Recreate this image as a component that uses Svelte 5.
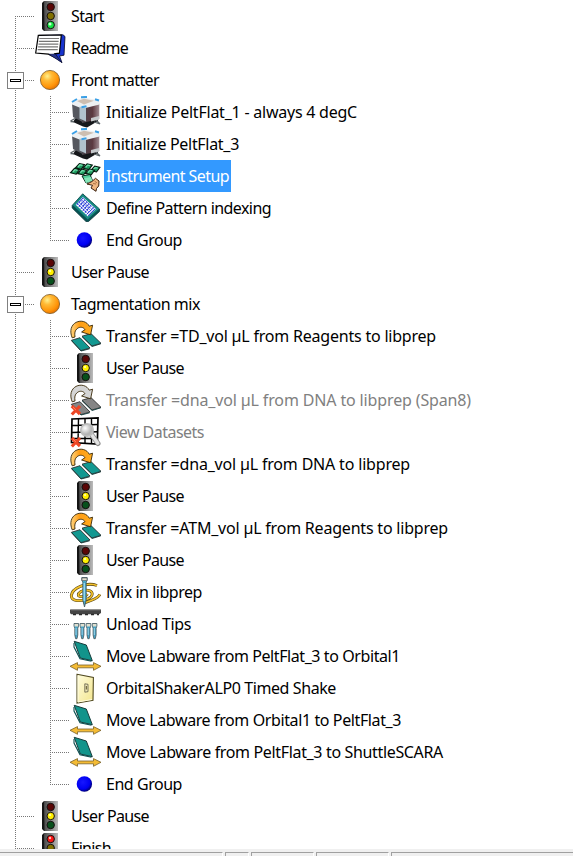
<script>
  const rows = [
    { d: 0, icon: 'green', text: 'Start', w: 33, first: true },
    { d: 0, icon: 'note', text: 'Readme', w: 57 },
    { d: 0, icon: 'orange', text: 'Front matter', w: 88, box: true },
    { d: 1, icon: 'pelt', text: 'Initialize PeltFlat_1 - always 4 degC', w: 251 },
    { d: 1, icon: 'pelt', text: 'Initialize PeltFlat_3', w: 133 },
    { d: 1, icon: 'setup', text: 'Instrument Setup', w: 123, selected: true },
    { d: 1, icon: 'pattern', text: 'Define Pattern indexing', w: 165 },
    { d: 1, icon: 'blue', text: 'End Group', w: 76, end: true },
    { d: 0, icon: 'yellow', text: 'User Pause', w: 78 },
    { d: 0, icon: 'orange', text: 'Tagmentation mix', w: 129, box: true },
    { d: 1, icon: 'transfer', text: 'Transfer =TD_vol µL from Reagents to libprep', w: 330 },
    { d: 1, icon: 'yellow', text: 'User Pause', w: 78 },
    { d: 1, icon: 'transferOff', text: 'Transfer =dna_vol µL from DNA to libprep (Span8)', w: 365, off: true },
    { d: 1, icon: 'datasets', text: 'View Datasets', w: 98, off: true },
    { d: 1, icon: 'transfer', text: 'Transfer =dna_vol µL from DNA to libprep', w: 304 },
    { d: 1, icon: 'yellow', text: 'User Pause', w: 78 },
    { d: 1, icon: 'transfer', text: 'Transfer =ATM_vol µL from Reagents to libprep', w: 342 },
    { d: 1, icon: 'yellow', text: 'User Pause', w: 78 },
    { d: 1, icon: 'mix', text: 'Mix in libprep', w: 96 },
    { d: 1, icon: 'tips', text: 'Unload Tips', w: 85 },
    { d: 1, icon: 'move', text: 'Move Labware from PeltFlat_3 to Orbital1', w: 294 },
    { d: 1, icon: 'panel', text: 'OrbitalShakerALP0 Timed Shake', w: 230 },
    { d: 1, icon: 'move', text: 'Move Labware from Orbital1 to PeltFlat_3', w: 295 },
    { d: 1, icon: 'move', text: 'Move Labware from PeltFlat_3 to ShuttleSCARA', w: 337 },
    { d: 1, icon: 'blue', text: 'End Group', w: 76, end: true },
    { d: 0, icon: 'yellow', text: 'User Pause', w: 78 },
    { d: 0, icon: 'red', text: 'Finish', w: 40, end: true }
  ];
  const tiles = [[11, 6.3], [18.7, 6.6], [26.3, 9], [6, 11.2], [13.3, 12], [21, 11.8]];
  const checks = [0, 1, 2, 3, 4];

  function fit(node, width) {
    const natural = node.getBoundingClientRect().width;
    node.style.letterSpacing = (width - natural) / node.textContent.length + 'px';
  }
</script>

<svg class="defs" aria-hidden="true">
  <defs>
    <linearGradient id="housing"><stop offset="0" stop-color="#484848" /><stop offset="1" stop-color="#bcbcbc" /></linearGradient>
    <radialGradient id="gOrange" cx=".36" cy=".3" r=".8"><stop offset="0" stop-color="#fff08e" /><stop offset=".3" stop-color="#ffba36" /><stop offset=".7" stop-color="#ff9408" /><stop offset="1" stop-color="#d86400" /></radialGradient>
    <radialGradient id="gBlue" cx=".4" cy=".38" r=".68"><stop offset="0" stop-color="#1616ff" /><stop offset=".65" stop-color="#0000f2" /><stop offset="1" stop-color="#000058" /></radialGradient>
    <linearGradient id="gArrow"><stop offset="0" stop-color="#ffd684" /><stop offset=".4" stop-color="#ff9d14" /><stop offset="1" stop-color="#ffad20" /></linearGradient>
    <linearGradient id="gPelt"><stop offset="0" stop-color="#4a474e" /><stop offset=".6" stop-color="#5b383f" /><stop offset="1" stop-color="#a08c93" /></linearGradient>
    <linearGradient id="gPanel" x2="1" y2="1"><stop offset="0" stop-color="#fffde0" /><stop offset="1" stop-color="#f3e58c" /></linearGradient>
    <radialGradient id="gLens" cx=".35" cy=".35"><stop offset="0" stop-color="#fff" /><stop offset="1" stop-color="#b4b4b4" /></radialGradient>
  </defs>
</svg>

{#snippet lights(on)}
  <path d="M8 3 10 1H24V31H10L8 29Z" fill="#151515" />
  <path d="M10 1H24V31H10.5Z" fill="url(#housing)" />
  <circle cx="16.7" cy="7" r="3.7" fill={on === 'red' ? '#fa1414' : '#5a0606'} stroke="#161010" stroke-width="1" />
  <circle cx="16.7" cy="16" r="3.7" fill={on === 'yellow' ? '#fff000' : '#817000'} stroke="#161010" stroke-width="1" />
  <circle cx="16.7" cy="25" r="3.7" fill={on === 'green' ? '#12e742' : '#07501c'} stroke="#161010" stroke-width="1" />
  {#if on === 'red'}<circle cx="16" cy="6" r="1.2" fill="#ffc0b8" />{/if}
  {#if on === 'yellow'}<circle cx="16" cy="15" r="1.1" fill="#ffffb8" />{/if}
  {#if on === 'green'}<circle cx="16" cy="24" r="1.5" fill="#c9ffd2" />{/if}
{/snippet}

{#snippet cross()}
  <path d="M2.8 22 11 30M11 22 2.8 30.5" stroke="#ed4625" stroke-width="3.2" fill="none" />
  <path d="M4 23.2 6.9 26" stroke="#ff8b68" />
{/snippet}

{#snippet transfer(arrow, plate)}
  <path d="M2.4 20.3 11 17.7 21 28 12 30.6Z" fill={plate} stroke="#222" stroke-width=".8" />
  <path d="M13 16.2 22 13.6 32 23.3 23 26Z" fill={plate} stroke="#222" stroke-width=".8" />
  <path d="M2.6 20.8 12 31 20.6 28.8M13 16.7 23 26.5 31.8 23.8" fill="none" stroke="#123c3c" stroke-width=".9" />
  <path d="M3.2 17.8C.3 11 2.2 5 7 2.4 12 -.2 18.1 1.6 20.2 6.2L23.6 5.2 21.6 14.8 12.6 12 16 9.6C14.3 6.9 10.8 6.5 8.2 8.6 5.8 10.6 5.4 13 6 17Z" fill={arrow} stroke="#392807" stroke-width=".9" />
{/snippet}

{#snippet icon(name)}
  <svg class="icon" viewBox="0 0 32 32" aria-hidden="true">
    {#if name === 'green' || name === 'yellow' || name === 'red'}
      {@render lights(name)}
    {:else if name === 'note'}
      <path d="M5 3.3 29 2.8 31 4.5 30 23.2 25.5 24 28 30.7 17 22.5Z" fill="#1834cf" stroke="#050520" stroke-width=".8" />
      <path d="M4.3 3.4 27.3 3 25.4 21.2 20.8 21.8 24.5 27.5 14.5 22.2 1.7 21Z" fill="#fff" stroke="#000" stroke-width="1.2" />
      <path d="M15 22.3 27.5 30.2 21.3 22Z" fill="#26338a" stroke="#0a1040" stroke-width=".6" />
      <path d="M5.3 6.5H25M4.8 9.3H24.6M4.5 12.1H24.3M4.1 14.9H24M3.7 17.7H23.7" stroke="#777" stroke-width="1.2" />
    {:else if name === 'orange'}
      <circle cx="16" cy="16" r="9.6" fill="url(#gOrange)" stroke="#7c5a26" stroke-width=".8" />
    {:else if name === 'blue'}
      <circle cx="15.4" cy="16" r="7.7" fill="url(#gBlue)" />
    {:else if name === 'pelt'}
      <path d="M4 26 8 20 28 21 29 25 18 31.5 14 30.5Z" fill="#15171a" />
      <path d="M1.5 25 6 22.5M1.5 25.5 5 25.8M27 24 31 28M25 26 31 28" fill="none" stroke="#5a6266" stroke-width="1.3" />
      <path d="M3 7 13.5 11.5V26L4 21Z" fill="#56585f" />
      <path d="M13 11.5 30.3 7.5V23L13 27Z" fill="url(#gPelt)" />
      <path d="M22 22 30 20V23.5L22 25.5Z" fill="#c3c7ca" />
      <path d="M3 5.5 15 1.5 30.5 4.5V8.5L13.5 12.8 3 8.5Z" fill="#edf0f2" />
      <path d="M8 5 15 2.8 25 4.8 15 8.5Z" fill="#cdbeb1" />
      <path d="M10.5 10.5 17 12V25.5L10.5 22.5Z" fill="#b1c3cd" />
      <path d="M3 6 8 3M12 1.2 18 .9M12.5 11.3 17.5 10.2M26 3.2 30 4.5" stroke="#3ba0e6" stroke-width="2" />
    {:else if name === 'setup'}
      {#each tiles as [x, y]}
        <path d="M{x - 4.6} {y + 1.6} {x - .6} {y - 2.8} {x + 4.6} {y - 1.6} {x + 1.2} {y + 3}Z" fill="#1e9a5e" stroke="#06180f" stroke-width="1.1" />
        <path d="M{x - 2} {y + .7} {x} {y - 1.5} {x + 2.4} {y - .9}" fill="none" stroke="#6fdcaa" stroke-width="1.3" />
      {/each}
      <path d="M13 16 21 14.5 23.5 20.5 17 23Z" fill="#54d29c" stroke="#08291b" />
      <path d="M15 18.3 22 17 23.5 21 17 23Z" fill="#83e5b8" />
      <path d="M18 24 23 21.5 26.5 18.3 30 21 29.7 26 27.5 28.5 27 31.3 22 28 23.5 25.3Z" fill="#efb681" stroke="#3c210d" />
      <path d="M24 23.5 27 24M25.5 21 28 23" fill="none" stroke="#8e572b" stroke-width=".7" />
    {:else if name === 'pattern'}
      <path d="M3.2 13.5 13.7 1.8 30.5 17V19.5L19.5 29.5H17L3.2 16Z" fill="#075353" stroke="#07383c" stroke-width=".8" />
      <path d="M3.7 13 13.7 2.2 30.2 16.7 18.7 27.5Z" fill="#178a83" />
      <path d="M6.7 12.8 13.8 5 27 16.9 18.9 24.6Z" fill="#fff" />
      {#each checks as n}
        <path d="M{7.8 + n * 2} {12.7 + n * 1.95} {14 + n * 2} {6 + n * 1.85}" stroke="#1a2fd5" stroke-width="1.2" stroke-dasharray="1.9 .8" />
        <path d="M{8.2 + n * 1.5} {11.3 - n * 1.25} {18.5 + n * 1.5} {21.2 - n * 1.25}" stroke="#1a2fd5" stroke-width=".6" />
      {/each}
      <path d="M17.5 22.5 25 15.3M19 23.8 26.3 16.6" stroke="#1a2fd5" stroke-width="1" />
    {:else if name === 'transfer'}
      {@render transfer('url(#gArrow)', '#129891')}
    {:else if name === 'transferOff'}
      {@render transfer('#d5d5d5', '#858585')}
      {@render cross()}
    {:else if name === 'datasets'}
      <path d="M3 3 29 1.8 28.3 28 2.5 26.5Z" fill="#fff" stroke="#000" stroke-width="1.7" />
      <path d="M3 9.5 28.5 8.5M3 16.5 28.5 15.8M3 22.5H28.5M9.5 2.5 9 27M16 2.5V27.5M22.5 3V28" stroke="#000" stroke-width="1.4" />
      <path d="M22.5 18.5 29 27.5" stroke="#8a8a8a" stroke-width="5" stroke-linecap="round" />
      <path d="M22.5 18.5 28.8 27.2" stroke="#e2e2e2" stroke-width="3.4" stroke-linecap="round" />
      <circle cx="18" cy="14" r="6.2" fill="url(#gLens)" stroke="#bdbdbd" stroke-width="1.7" />
      {@render cross()}
    {:else if name === 'mix'}
      <path d="M28 9.5C17 5.5 3 12.5 2.3 19.5 2 25.5 12 26 19.5 22.5 25 19.5 24 15 19 14.3 13 13.5 8.5 17 9.5 19.8 11.5 21.5 17 20.5 18.5 18M31 18.5C28 23.5 21 25 14.5 27" fill="none" stroke="#544314" stroke-width="2.8" />
      <path d="M28 9.5C17 5.5 3 12.5 2.3 19.5 2 25.5 12 26 19.5 22.5 25 19.5 24 15 19 14.3 13 13.5 8.5 17 9.5 19.8 11.5 21.5 17 20.5 18.5 18M31 18.5C28 23.5 21 25 14.5 27" fill="none" stroke="#f2c02c" stroke-width="1.7" />
      <path d="M12.8 1.5H18.2V4.5L17.2 6V24L15.5 31 13.8 24V6L12.8 4.5Z" fill="#48a9ca" stroke="#42545b" stroke-width=".8" />
      <path d="M13 2H18V4.5H13Z" fill="#e2e1d0" stroke="#555" stroke-width=".6" />
      <path d="M15.2 7V25" stroke="#b9eaff" stroke-width="1" />
    {:else if name === 'tips'}
      <path d="M1 1.5H32V5L30 6.2H2L1 5Z" fill="#444" />
      <path d="M2 2H31.5" stroke="#777" stroke-width=".8" />
      <path d="M4 6.5H7M10 6.5H13M16 6.5H19M22 6.5H25M28 6.5H30" stroke="#292929" stroke-width="1.6" />
      {#each [7.3, 13.4, 19.5, 25.6] as x}
        <path d="M{x - 2.3} 15.5H{x + 2.3}V18L{x + 1.5} 20.3V27L{x + .7} 30.7H{x - .7}L{x - 1.5} 27V20.3L{x - 2.3} 18Z" fill="#45a4c8" stroke="#4a5559" stroke-width=".8" />
        <path d="M{x - 1.8} 16H{x + 1.8}V18.5H{x - 1.8}Z" fill="#e0dfcf" />
        <path d="M{x - .3} 20V27" stroke="#b4e4f6" stroke-width=".8" />
      {/each}
    {:else if name === 'move'}
      <path d="M5.2 1.3 17.3 5 23.3 20.7 11.3 18Z" fill="#12948b" stroke="#173c3b" stroke-width="1" />
      <path d="M5 3V7L11 18.8 22.5 21.3" fill="none" stroke="#0b4e50" stroke-width="1.1" />
      <path d="M1 26.3 8.5 22.6V25H24.5V22.6L32 26.3 24.5 30.3V27.8H8.5V30.3Z" fill="#f4bb34" stroke="#786128" stroke-width=".8" />
    {:else if name === 'panel'}
      <path d="M8 2.3 24.4 5.5 24 28.2 8 31Z" fill="url(#gPanel)" stroke="#514a21" stroke-width="1.1" />
      <path d="M9 3.5V30L23 27.5" fill="none" stroke="#fffce0" />
      <path d="M15.8 11.8 19 12.3V19.7L15.8 20.2Z" fill="#efe8b8" stroke="#5d5945" stroke-width=".8" />
      <path d="M17.4 14V17.5" stroke="#777044" stroke-width="1.2" />
    {/if}
  </svg>
{/snippet}

<main>
  <div class="tree">
    {#each rows as r}
      <div class="row">
        <div class="guide" class:branch={r.d === 0} class:first={r.first} class:end={r.d === 0 && r.end}>
          {#if r.box}<span class="toggle"><i></i></span>{/if}
        </div>
        {#if r.d}<div class="guide child branch" class:end={r.end}></div>{/if}
        {@render icon(r.icon)}
        <div class="label" class:selected={r.selected} class:off={r.off}><span use:fit={r.w}>{r.text}</span></div>
      </div>
    {/each}
  </div>
  <footer>
    <div class="p0"></div><div class="p1"></div><div class="p2"></div><div class="p3"></div><div class="p4"></div>
  </footer>
</main>

<style>
  :global(body) { margin: 0; background: #fff; overflow: hidden; }
  .defs { position: absolute; width: 0; height: 0; }
  main { display: flex; flex-direction: column; height: 856px; width: 573px; overflow: hidden; font: 16px/32px "Noto Sans", "Open Sans", sans-serif; color: #000; }
  .tree { height: 849px; flex: none; overflow: hidden; }
  .row { display: flex; height: 32px; }
  .guide { position: relative; flex: none; width: 34px; height: 32px; --x: 15px; }
  .guide.child { width: 35px; --x: 16px; }
  .guide::before { content: ""; position: absolute; left: var(--x); top: 0; bottom: 0; width: 1px; background: repeating-linear-gradient(#777 0 1px, transparent 1px 2px); }
  .guide.first::before { top: 16px; }
  .guide.end::before { bottom: 15px; }
  .guide.branch::after { content: ""; position: absolute; left: var(--x); right: 0; top: 16px; height: 1px; background: repeating-linear-gradient(90deg, #777 0 1px, transparent 1px 2px); }
  .toggle { position: absolute; z-index: 1; left: 7px; top: 8px; width: 17px; height: 17px; box-sizing: border-box; border: 1px solid #808080; background: #fff; display: grid; place-items: center; }
  .toggle i { box-sizing: border-box; width: 11px; height: 3px; border: 1px solid #000; background: #fff; }
  .icon { width: 32px; height: 32px; flex: none; display: block; }
  .label { margin-left: 3px; padding: 0 2px; height: 32px; white-space: pre; }
  .label span { display: inline-block; }
  .selected { background: #39f; color: #fff; }
  .off { color: #808080; }
  footer { height: 7px; box-sizing: border-box; padding-top: 3px; background: #f0f0f0; display: flex; gap: 2px; }
  footer div { box-sizing: border-box; border-top: 1px solid #a0a0a0; border-left: 1px solid #a0a0a0; border-right: 1px solid #fff; }
  .p0 { width: 223px; border-left: 0; }
  .p1 { width: 24px; }
  .p2 { width: 63px; }
  .p3 { width: 73px; }
  footer .p4 { flex: 1; border-right: 0; }
</style>
